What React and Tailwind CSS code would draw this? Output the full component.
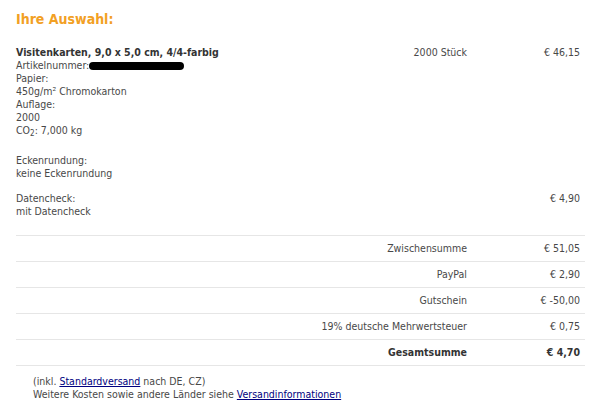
import React from "react";

const font = { fontFamily: '"DejaVu Sans Condensed", "DejaVu Sans", sans-serif' };

function TotalRow({ label, value, bold }) {
  return (
    <div className={`flex items-center h-[26px] border-t border-[#e6e6e6] ${bold ? "font-bold text-[#333]" : ""}`}>
      <div className="flex-1 text-right">{label}</div>
      <div className="w-[118px] text-right pr-[5px]">{value}</div>
    </div>
  );
}

export default function App() {
  const totals = [
    { label: "Zwischensumme", value: "€ 51,05" },
    { label: "PayPal", value: "€ 2,90" },
    { label: "Gutschein", value: "€ -50,00" },
    { label: "19% deutsche Mehrwertsteuer", value: "€ 0,75" },
    { label: "Gesamtsumme", value: "€ 4,70", bold: true },
  ];

  return (
    <div className="w-[598px] h-[409px] bg-white text-[#484848] text-[10.5px] leading-[13px] pl-4 pr-[13px] pt-[10px]" style={font}>
      <h2 className="text-[14px] leading-[18px] font-bold text-[#f2a024]">Ihre Auswahl:</h2>

      {/* Artikel */}
      <div className="mt-[18px] flex">
        <div className="flex-1">
          <div className="font-bold text-[#333]">Visitenkarten, 9,0 x 5,0 cm, 4/4-farbig</div>
          <div className="flex items-center">
            Artikelnummer:
            <span className="inline-block w-[95px] h-[8px] bg-black rounded-full"></span>
          </div>
          <div>Papier:</div>
          <div>450g/m² Chromokarton</div>
          <div>Auflage:</div>
          <div>2000</div>
          <div>
            CO<sub className="text-[8px]">2</sub>: 7,000 kg
          </div>
          <div className="mt-[17px]">Eckenrundung:</div>
          <div>keine Eckenrundung</div>
        </div>
        <div className="w-[140px] text-right">2000 Stück</div>
        <div className="w-[118px] text-right pr-[5px]">€ 46,15</div>
      </div>

      <div className="mt-[12px] flex">
        <div className="flex-1">
          <div>Datencheck:</div>
          <div>mit Datencheck</div>
        </div>
        <div className="w-[118px] text-right pr-[5px]">€ 4,90</div>
      </div>

      <div className="mt-[17px] border-b border-[#e6e6e6]">
        {totals.map((t) => (
          <TotalRow key={t.label} {...t} />
        ))}
      </div>

      <div className="mt-[9px] pl-[17px]">
        <div>
          (inkl. <a href="#" className="underline text-[#000080]">Standardversand</a> nach DE, CZ)
        </div>
        <div>
          Weitere Kosten sowie andere Länder siehe{" "}
          <a href="#" className="underline text-[#000080]">Versandinformationen</a>
        </div>
      </div>
    </div>
  );
}
